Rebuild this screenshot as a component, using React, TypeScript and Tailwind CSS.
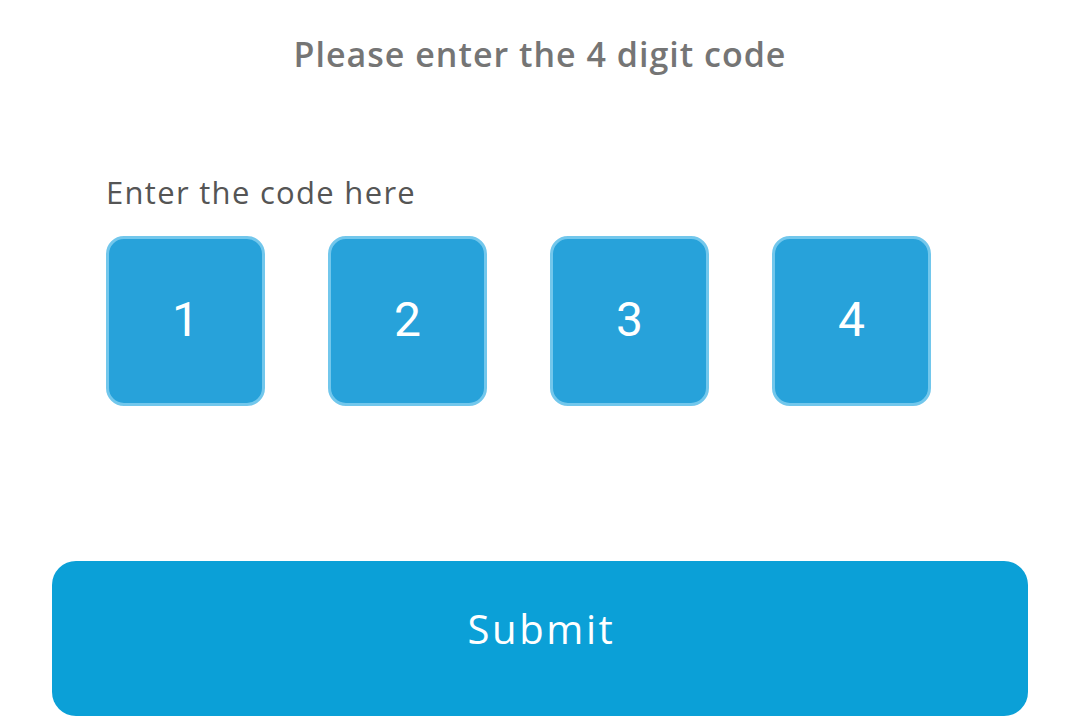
import React from "react";

export default function App() {
  const digits = ["1", "2", "3", "4"];
  return (
    <div className="w-[1080px] h-[720px] bg-white overflow-hidden flex flex-col" style={{ fontFamily: '"Open Sans", "Liberation Sans", sans-serif' }}>
      <div className="pt-[34px] h-[74px] text-center text-[34px] leading-[40px] font-semibold tracking-[1px] text-[#757575]">
        Please enter the 4 digit code
      </div>
      <div className="mt-[100px] pl-[106px] text-[31px] leading-[36px] tracking-[1.3px] text-[#555555]">
        Enter the code here
      </div>
      <div className="mt-[26px] pl-[106px] flex gap-[63px]">
        {digits.map((d) => (
          <div
            key={d}
            className="w-[159px] h-[170px] rounded-[18px] border-[3px] border-[#72c7ec] bg-[#27a2da] flex items-center justify-center text-white text-[48px] font-['Roboto'] pb-[2px]"
          >
            {d}
          </div>
        ))}
      </div>
      <button className="mt-[155px] mx-[52px] h-[155px] rounded-[24px] bg-[#0ba0d7] text-white text-[40px] tracking-[2.6px] pl-[3px] pb-[20px] flex items-center justify-center">
        Submit
      </button>
    </div>
  );
}
